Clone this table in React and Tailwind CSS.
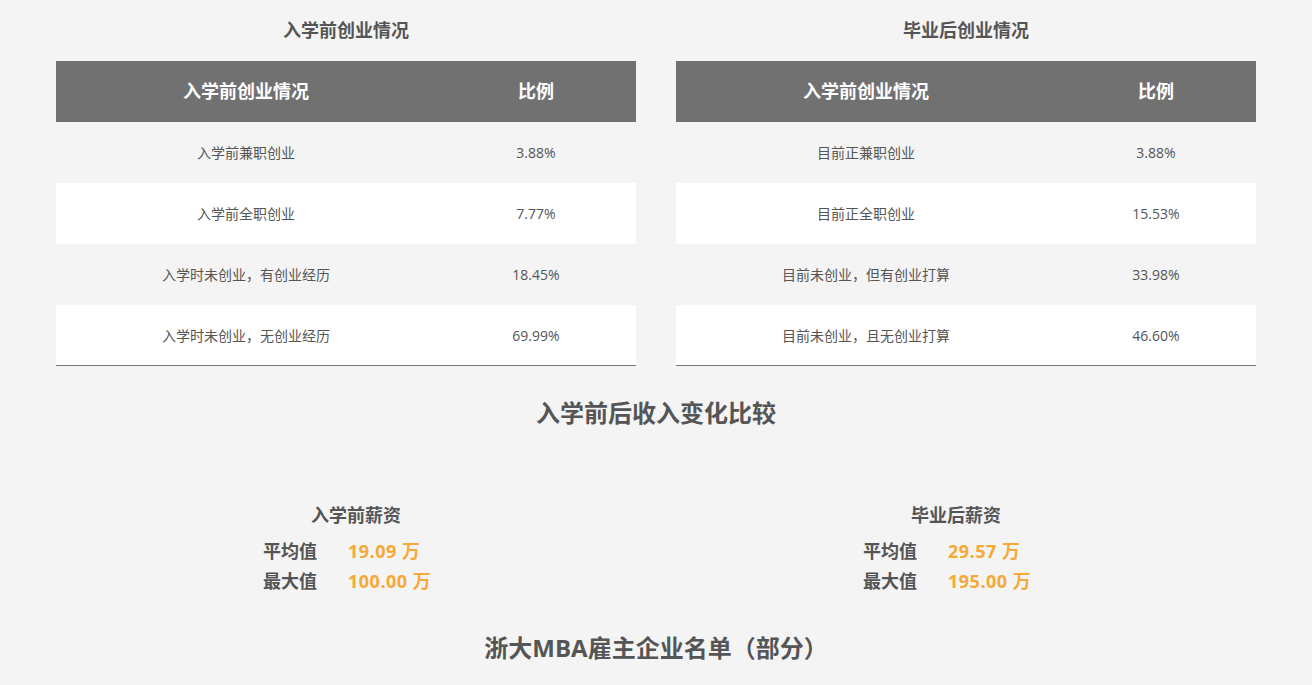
import React from "react";

const font = { fontFamily: '"Open Sans", "Noto Sans CJK SC", sans-serif' };

const tables = [
  {
    title: "入学前创业情况",
    rows: [
      ["入学前兼职创业", "3.88%"],
      ["入学前全职创业", "7.77%"],
      ["入学时未创业，有创业经历", "18.45%"],
      ["入学时未创业，无创业经历", "69.99%"],
    ],
  },
  {
    title: "毕业后创业情况",
    rows: [
      ["目前正兼职创业", "3.88%"],
      ["目前正全职创业", "15.53%"],
      ["目前未创业，但有创业打算", "33.98%"],
      ["目前未创业，且无创业打算", "46.60%"],
    ],
  },
];

const salaries = [
  { title: "入学前薪资", avg: "19.09 万", max: "100.00 万" },
  { title: "毕业后薪资", avg: "29.57 万", max: "195.00 万" },
];

function StatTable({ title, rows }) {
  return (
    <div className="w-[580px]">
      <div className="h-[61px] flex items-center justify-center text-[18px] font-bold text-[#555]">
        {title}
      </div>
      <div className="border-b border-[#777]">
        <div className="h-[61px] bg-[#717171] grid grid-cols-[380px_200px] items-center text-white text-[18px] font-bold">
          <div className="text-center">入学前创业情况</div>
          <div className="text-center">比例</div>
        </div>
        {rows.map((r, i) => (
          <div
            key={i}
            className={`grid grid-cols-[380px_200px] items-center text-[14px] text-[#555] ${
              i % 2 === 0 ? "h-[61px] bg-[#f4f4f4]" : i === rows.length - 1 ? "h-[60px] bg-white" : "h-[61px] bg-white"
            }`}
          >
            <div className="text-center">{r[0]}</div>
            <div className="text-center">{r[1]}</div>
          </div>
        ))}
      </div>
    </div>
  );
}

export default function App() {
  return (
    <div className="min-h-[685px] bg-[#f4f4f4] text-[#555]" style={font}>
      <div className="w-[1200px] mx-auto">
        <div className="flex gap-10">
          {tables.map((t) => (
            <StatTable key={t.title} {...t} />
          ))}
        </div>

        <div className="h-[94px] flex items-center justify-center text-[24px] font-bold">
          入学前后收入变化比较
        </div>

        <div className="mt-[40px] grid grid-cols-2">
          {salaries.map((s) => (
            <div key={s.title} className="flex flex-col items-center">
              <div className="h-[30px] flex items-center text-[18px] font-bold">{s.title}</div>
              <div className="mt-[6px] w-[186px] flex flex-col">
                <div className="h-[30px] flex items-center text-[18px] font-bold">
                  <span className="w-[85px]">平均值</span>
                  <span className="text-[#f7a937] tracking-[0.5px]">{s.avg}</span>
                </div>
                <div className="h-[30px] flex items-center text-[18px] font-bold">
                  <span className="w-[85px]">最大值</span>
                  <span className="text-[#f7a937] tracking-[0.5px]">{s.max}</span>
                </div>
              </div>
            </div>
          ))}
        </div>

        <div className="mt-[27px] h-[50px] flex items-center justify-center text-[24px] font-bold">
          浙大MBA雇主企业名单（部分）
        </div>
      </div>
    </div>
  );
}
